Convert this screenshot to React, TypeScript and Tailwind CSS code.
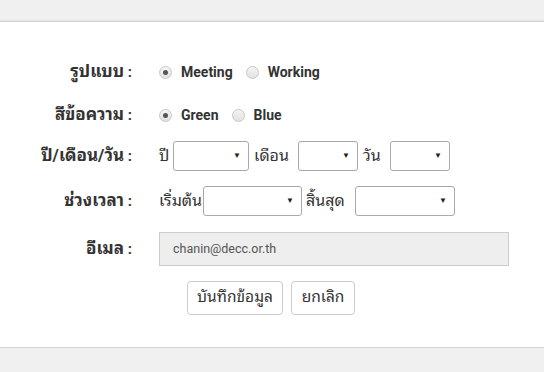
import React from 'react';

const font = { fontFamily: 'Roboto, "Noto Sans Thai Looped", sans-serif' };

function Radio({ checked, label }: { checked?: boolean; label: string }) {
  return (
    <label className="flex items-center">
      <span className="w-[13px] h-[13px] rounded-full border border-[#c8c8c8] bg-gradient-to-b from-[#f4f4f4] to-[#e2e2e2] flex items-center justify-center">
        {checked && <span className="w-[5px] h-[5px] rounded-full bg-[#555]" />}
      </span>
      <span className="ml-[9px] text-[14px] font-bold text-[#333]">{label}</span>
    </label>
  );
}

function Select({ w }: { w: string }) {
  return (
    <div className={`${w} shrink-0 h-[30px] border border-[#a9a9a9] rounded-[3px] bg-white flex items-center justify-end pr-[7px]`}>
      <span className="text-[8px] text-[#222] leading-none">▼</span>
    </div>
  );
}

function Row({ label, children, className }: { label: string; children: React.ReactNode; className: string }) {
  return (
    <div className={`flex items-center ${className}`}>
      <div className="w-[132px] text-right font-bold text-[#333] whitespace-nowrap">
        <span className="text-[17px]">{label}</span>
        <span className="text-[15px]"> :</span>
      </div>
      <div className="ml-[27px] flex items-center">{children}</div>
    </div>
  );
}

export default function App() {
  return (
    <div className="w-[544px] h-[372px] bg-[#f0f0f0] pt-[21px]" style={font}>
      <div className="h-[327px] bg-white border-y border-[#d4d4d4] shadow-[0_-1px_1px_rgba(0,0,0,0.05)] pt-[35px]">
        <Row label="รูปแบบ" className="h-[30px]">
          <Radio checked label="Meeting" />
          <div className="ml-[13px]">
            <Radio label="Working" />
          </div>
        </Row>

        <Row label="สีข้อความ" className="h-[30px] mt-[13px]">
          <Radio checked label="Green" />
          <div className="ml-[13px]">
            <Radio label="Blue" />
          </div>
        </Row>

        <Row label="ปี/เดือน/วัน" className="h-[30px] mt-[11px]">
          <span className="w-[14px] min-w-0 shrink-0 text-[16px] text-[#333] whitespace-nowrap">ปี</span>
          <Select w="w-[76px]" />
          <span className="ml-[5px] w-[44px] min-w-0 shrink-0 text-[16px] text-[#333] whitespace-nowrap">เดือน</span>
          <Select w="w-[60px]" />
          <span className="ml-[5px] w-[27px] min-w-0 shrink-0 text-[16px] text-[#333] whitespace-nowrap">วัน</span>
          <Select w="w-[60px]" />
        </Row>

        <Row label="ช่วงเวลา" className="h-[30px] mt-[15px]">
          <span className="w-[44px] min-w-0 shrink-0 text-[16px] text-[#333] whitespace-nowrap">เริ่มต้น</span>
          <Select w="w-[99px]" />
          <span className="ml-[4px] w-[49px] min-w-0 shrink-0 text-[16px] text-[#333] whitespace-nowrap">สิ้นสุด</span>
          <Select w="w-[100px]" />
        </Row>

        <Row label="อีเมล" className="h-[34px] mt-[16px]">
          <div className="w-[350px] h-[34px] bg-[#eeeeee] border border-[#cccccc] flex items-center pl-[13px] text-[12.5px] text-[#555]">
            chanin@decc.or.th
          </div>
        </Row>

        <div className="flex mt-[15px] pl-[187px] gap-[8px]">
          <button className="w-[96px] h-[34px] rounded-[4px] border border-[#cccccc] bg-white text-[15.5px] text-[#333]">
            บันทึกข้อมูล
          </button>
          <button className="w-[64px] h-[34px] rounded-[4px] border border-[#cccccc] bg-white text-[15.5px] text-[#333]">
            ยกเลิก
          </button>
        </div>
      </div>
    </div>
  );
}
